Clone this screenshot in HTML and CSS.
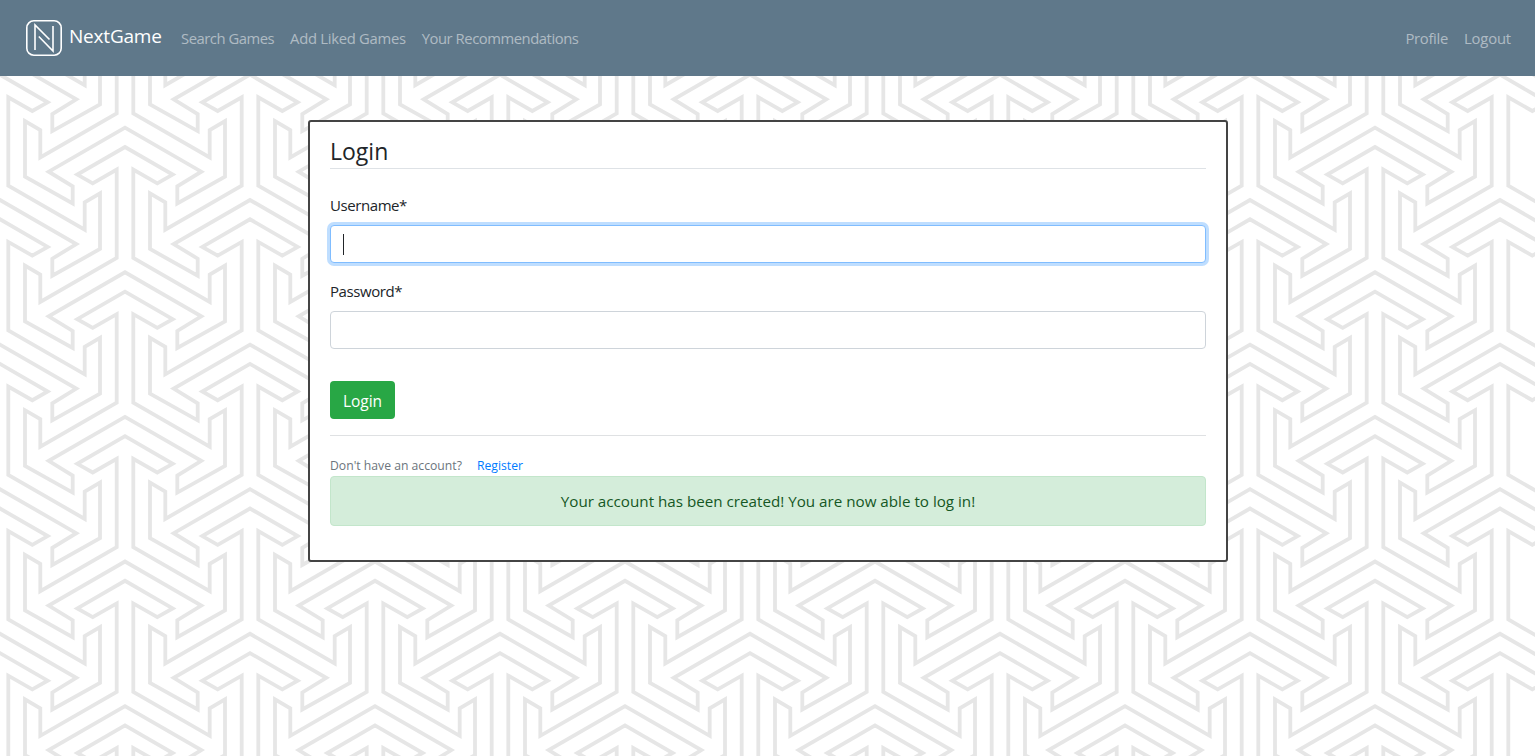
FILE: index.html
```html
<!DOCTYPE html>
<html lang="en">
<head>
<meta charset="utf-8">
<title>NextGame - Login</title>
<link rel="stylesheet" href="styles.css">
</head>
<body>
<svg class="backdrop" width="1535" height="756" aria-hidden="true">
  <defs>
    <path id="key" d="M8.3 93.3V181.7L84.7 225.7V198.3L100 189.3V245L52.3 271.7V254.7L76.3 240L0 196L-76.3 240L-52.3 254.7V271.7L-100 245V189.3L-84.7 198.3V225.7L-8.3 181.7V93.3L-32.3 107L-47.7 98.3L0 70.7L47.7 98.3L32.3 107Z"/>
    <g id="col">
      <use href="#key" y="-289.2"/><use href="#key" y="-144.6"/><use href="#key"/><use href="#key" y="144.6"/><use href="#key" y="289.2"/><use href="#key" y="433.8"/><use href="#key" y="578.4"/>
    </g>
    <g id="pair"><use href="#col"/><use href="#col" x="125" y="72.3"/></g>
  </defs>
  <g transform="translate(-125 76.3)">
    <use href="#pair"/><use href="#pair" x="250"/><use href="#pair" x="500"/><use href="#pair" x="750"/><use href="#pair" x="1000"/><use href="#pair" x="1250"/><use href="#pair" x="1500"/>
  </g>
</svg>
<header class="navbar">
  <a class="brand">
    <svg class="logo" width="36" height="36" viewBox="0 0 36 36"><rect x=".8" y=".8" width="34.4" height="34.4" rx="7"/><path d="M9 30V5L23.5 19.5M12.8 16.5L27 31V6"/></svg>
    <span class="brand-name">NextGame</span>
  </a>
  <nav class="links main"><a class="search">Search Games</a><a class="liked">Add Liked Games</a><a>Your Recommendations</a></nav>
  <nav class="links account"><a class="profile">Profile</a><a class="logout">Logout</a></nav>
</header>
<main class="card">
  <form>
    <h1 class="title">Login</h1>
    <div class="group">
      <label>Username*</label>
      <div class="field focused"><span class="caret"></span></div>
    </div>
    <div class="group">
      <label>Password*</label>
      <div class="field"></div>
    </div>
    <button class="submit" type="button">Login</button>
  </form>
  <div class="signup"><span class="muted">Don't have an account?</span><a class="register">Register</a></div>
  <div class="alert"><span>Your account has been created! You are now able to log in!</span></div>
</main>
</body>
</html>
```
FILE: styles.css
```css
* { box-sizing: border-box; }
body {
  margin: 0;
  height: 756px;
  overflow: hidden;
  background: #fff;
  color: #212529;
  font: 15px/24px "Open Sans", "Noto Sans", sans-serif;
}
.backdrop {
  position: absolute;
  inset: 0;
  z-index: -1;
  fill: none;
  stroke: #e6e6e6;
  stroke-width: 3.8;
  stroke-miterlimit: 10;
}
.navbar {
  display: flex;
  align-items: center;
  height: 76px;
  padding: 0 24px 0 26px;
  background: #5f788a;
}
.brand { display: flex; align-items: center; gap: 7px; width: 155px; color: #fff; }
.logo { fill: none; stroke: #fff; stroke-width: 1.6; }
.brand-name { margin-top: -4px; font-size: 19px; letter-spacing: -.2px; white-space: nowrap; }
.links {
  display: flex;
  gap: 16px;
  color: rgba(255, 255, 255, .5);
  font-size: 14.8px;
  letter-spacing: -.45px;
  white-space: nowrap;
}
.search { letter-spacing: -.47px; }
.liked { letter-spacing: -.28px; }
.account { margin-left: auto; }
.profile { letter-spacing: -.3px; }
.logout { letter-spacing: -.15px; }
.card {
  width: 920px;
  height: 442px;
  margin: 44px auto 0 308px;
  padding: 14px 20px;
  border: 2px solid #444;
  border-radius: 3px;
  background: #fff;
}
.title {
  margin: 0 0 24px;
  height: 33px;
  border-bottom: 1px solid #dee2e6;
  font-size: 23px;
  font-weight: 400;
  line-height: 31px;
}
.group { margin-bottom: 16px; }
label { display: block; margin-bottom: 8px; letter-spacing: -.42px; }
.field {
  height: 38px;
  padding: 8px 12px;
  border: 1px solid #ced4da;
  border-radius: 4px;
  background: #fff;
}
.focused { border-color: #80bdff; box-shadow: 0 0 0 3px #bfdeff; }
.caret { display: block; width: 1px; height: 21px; background: #212529; }
.submit {
  display: block;
  width: 65px;
  height: 38px;
  margin-top: 32px;
  padding: 1px 0 0;
  border: 0;
  border-radius: 4px;
  background: #28a745;
  color: #fff;
  font: inherit;
  font-size: 15.5px;
}
.signup {
  display: flex;
  gap: 15px;
  margin-top: 16px;
  padding-top: 19px;
  border-top: 1px solid #dfe1e3;
  font-size: 12.2px;
  line-height: 21px;
}
.muted { color: #6c757d; }
.register { color: #007bff; }
.alert {
  display: flex;
  align-items: center;
  justify-content: center;
  height: 50px;
  border: 1px solid #c3e6cb;
  border-radius: 4px;
  background: #d4edda;
  color: #155724;
  font-size: 15.2px;
}
```
